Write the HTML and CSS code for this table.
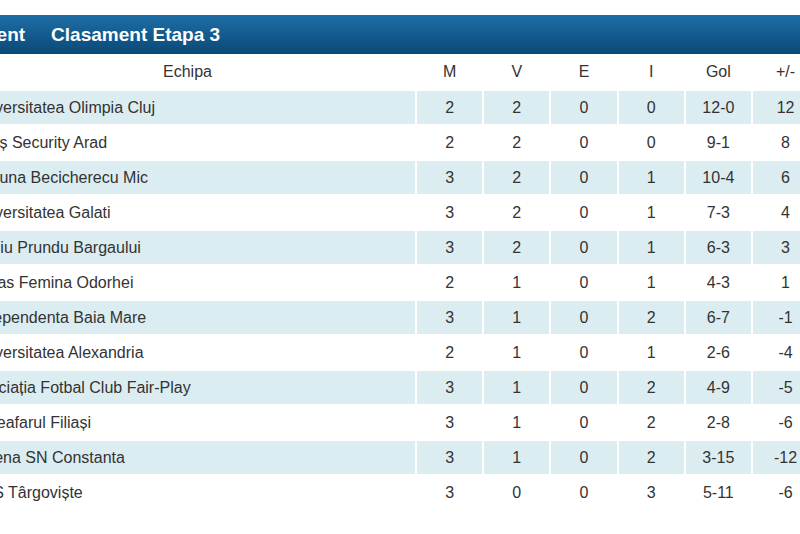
FILE: index.html
```html
<!DOCTYPE html>
<html lang="ro">
<head>
<meta charset="utf-8">
<title>Clasament Etapa 3</title>
<link rel="stylesheet" href="styles.css">
</head>
<body>
<div class="board">
  <div class="tabs">
    <span class="tab">Clasament</span>
    <span class="tab">Clasament Etapa 3</span>
  </div>
  <table class="standings">
    <colgroup>
      <col class="c-name">
      <col class="c-num"><col class="c-num"><col class="c-num"><col class="c-num"><col class="c-num"><col class="c-num">
    </colgroup>
    <thead>
      <tr><th class="name-h">Echipa</th><th>M</th><th>V</th><th>E</th><th>I</th><th>Gol</th><th>+/-</th></tr>
    </thead>
    <tbody>
      <tr><td class="name">Universitatea Olimpia Cluj</td><td>2</td><td>2</td><td>0</td><td>0</td><td>12-0</td><td>12</td></tr>
      <tr><td class="name">Piroș Security Arad</td><td>2</td><td>2</td><td>0</td><td>0</td><td>9-1</td><td>8</td></tr>
      <tr><td class="name">Fortuna Becicherecu Mic</td><td>3</td><td>2</td><td>0</td><td>1</td><td>10-4</td><td>6</td></tr>
      <tr><td class="name">Universitatea Galati</td><td>3</td><td>2</td><td>0</td><td>1</td><td>7-3</td><td>4</td></tr>
      <tr><td class="name">Heniu Prundu Bargaului</td><td>3</td><td>2</td><td>0</td><td>1</td><td>6-3</td><td>3</td></tr>
      <tr><td class="name">Vasas Femina Odorhei</td><td>2</td><td>1</td><td>0</td><td>1</td><td>4-3</td><td>1</td></tr>
      <tr><td class="name">Independenta Baia Mare</td><td>3</td><td>1</td><td>0</td><td>2</td><td>6-7</td><td>-1</td></tr>
      <tr><td class="name">Universitatea Alexandria</td><td>2</td><td>1</td><td>0</td><td>1</td><td>2-6</td><td>-4</td></tr>
      <tr><td class="name">Asociația Fotbal Club Fair-Play</td><td>3</td><td>1</td><td>0</td><td>2</td><td>4-9</td><td>-5</td></tr>
      <tr><td class="name">Luceafarul Filiași</td><td>3</td><td>1</td><td>0</td><td>2</td><td>2-8</td><td>-6</td></tr>
      <tr><td class="name">Selena SN Constanta</td><td>3</td><td>1</td><td>0</td><td>2</td><td>3-15</td><td>-12</td></tr>
      <tr><td class="name">CSS Târgoviște</td><td>3</td><td>0</td><td>0</td><td>3</td><td>5-11</td><td>-6</td></tr>
    </tbody>
  </table>
</div>
</body>
</html>
```

FILE: styles.css
```css
html, body {
  margin: 0;
  padding: 0;
  background: #ffffff;
  overflow: hidden;
}

body {
  font-family: "Liberation Sans", Arial, sans-serif;
  color: #333333;
}

.board {
  padding-top: 15px;
}

.tabs {
  display: flex;
  align-items: center;
  height: 39px;
  margin-left: -84px;
  background: linear-gradient(to bottom, #1f6ea6 0%, #135b8f 50%, #0b4977 100%);
}

.tab {
  padding: 0 13px;
  color: #ffffff;
  font-weight: bold;
  font-size: 19px;
  white-space: nowrap;
}

.standings {
  margin-left: -41px;
  width: 860px;
  table-layout: fixed;
  border-collapse: separate;
  border-spacing: 0;
  font-size: 16px;
}

.c-name { width: 457px; }
.c-num { width: 67.2px; }

.standings th,
.standings td {
  border: 1px solid #ffffff;
  text-align: center;
  font-weight: normal;
  padding: 0;
  white-space: nowrap;
  overflow: hidden;
}

.standings th {
  height: 34px;
  color: #333333;
}

.standings td {
  height: 33px;
}

.standings td.name {
  text-align: left;
  padding-left: 11px;
}

.standings tbody tr:nth-child(odd) td {
  background: #dcedf1;
}
```
